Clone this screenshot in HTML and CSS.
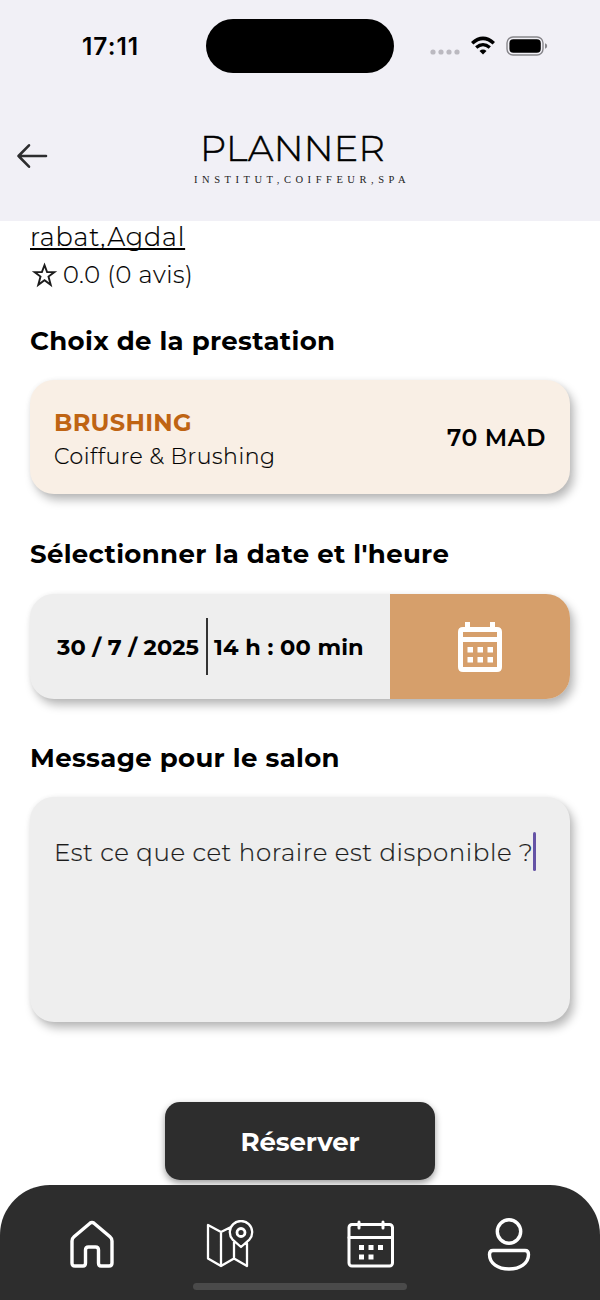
FILE: index.html
```html
<!DOCTYPE html>
<html lang="fr">
<head>
<meta charset="utf-8">
<title>Planner</title>
<link rel="stylesheet" href="styles.css">
</head>
<body>
<div class="screen">
  <header class="top">
    <div class="status">
      <div class="status-side"><span class="clock">17:11</span></div>
      <div class="island"></div>
      <div class="status-side signals">
        <svg class="dots" width="30" height="6" viewBox="0 0 30 6"><circle cx="3" cy="3" r="2.6"/><circle cx="11" cy="3" r="2.6"/><circle cx="19" cy="3" r="2.6"/><circle cx="27" cy="3" r="2.6"/></svg>
        <svg class="wifi" width="26" height="20" viewBox="0 0 26 20"><path d="M2.2 7.2Q13 -2.6 23.8 7.2" stroke-width="3.5"/><path d="M6.2 11.6Q13 5.6 19.8 11.6" stroke-width="3.3"/><path d="M13 18.4L9.5 14.9Q13 12 16.5 14.9Z" class="wifi-dot"/></svg>
        <svg class="battery" width="42" height="20" viewBox="0 0 42 20"><rect x="1" y="1" width="36" height="18" rx="6" class="shell"/><rect x="3.4" y="3.3" width="31.4" height="13.4" rx="4"/><path d="M39 7.2Q41.2 8 41.2 10T39 12.8Z" class="tip"/></svg>
      </div>
    </div>
    <div class="brand-row">
      <svg class="back" width="32" height="26" viewBox="0 0 32 26"><path d="M13 2.3L2.5 13L13 23.7M2.5 13H30"/></svg>
      <div class="brand">
        <div class="brand-name">PLANNER</div>
        <div class="brand-tag">INSTITUT,COIFFEUR,SPA</div>
      </div>
    </div>
  </header>
  <main class="content">
    <a class="address">rabat,Agdal</a>
    <div class="rating">
      <svg width="28" height="28" viewBox="0 0 28 28"><path d="M14.5 4.2L17.1 11.1H24.4L18.5 15.6L20.7 23.8L14.5 19.2L8.3 23.8L10.5 15.6L4.6 11.1H11.9Z"/></svg>
      <span class="score">0.0 (0 avis)</span>
    </div>
    <h2 class="title t-service">Choix de la prestation</h2>
    <section class="card service">
      <div>
        <div class="service-name">BRUSHING</div>
        <div class="service-kind">Coiffure &amp; Brushing</div>
      </div>
      <div class="price">70 MAD</div>
    </section>
    <h2 class="title t-date">Sélectionner la date et l'heure</h2>
    <section class="card schedule">
      <div class="when"><span class="day">30 / 7 / 2025</span><i class="rule"></i><span class="hour">14 h : 00 min</span></div>
      <button class="pick" aria-label="Choisir la date"><svg width="46" height="52" viewBox="0 0 46 52"><path fill-rule="evenodd" d="M8 1H13V6H33V1H38V6H40Q45 6 45 11V46Q45 51 40 51H6Q1 51 1 46V11Q1 6 6 6H8ZM6 11V16H40V11ZM6 21V46H40V21Z"/><path d="M10.5 26H16V31.5H10.5ZM20.5 26H26V31.5H20.5ZM30.5 26H36V31.5H30.5ZM10.5 36H16V41.5H10.5ZM20.5 36H26V41.5H20.5ZM30.5 36H36V41.5H30.5Z"/></svg></button>
    </section>
    <h2 class="title t-message">Message pour le salon</h2>
    <section class="card message"><span class="note">Est ce que cet horaire est disponible ?</span><i class="caret"></i></section>
    <button class="book">Réserver</button>
  </main>
  <nav class="tabs">
    <svg width="44" height="48" viewBox="0 0 44 48"><path stroke-width="3.4" d="M4 16.8L20 3.2Q22 1.6 24 3.2L40 16.8Q42 18.5 42 21V43Q42 46 39 46H31Q28.5 46 28.5 43V30Q28.5 27 25.5 27H18.5Q15.5 27 15.5 30V43Q15.5 46 13 46H5Q2 46 2 43V21Q2 18.5 4 16.8Z"/></svg>
    <svg width="48" height="48" viewBox="0 0 48 48"><path stroke-width="2.3" d="M24 7.5L15 12L2 5V38.5L15 46L28 38.5L41 46V23.5M15 12V46M28 22V38.5M35 27L26.6 19.6A11.2 11.2 0 1 1 43.4 19.6Z"/><circle cx="35" cy="12.5" r="4" stroke-width="2.8"/></svg>
    <svg width="48" height="48" viewBox="0 0 48 48"><rect x="2" y="4.5" width="43.5" height="41.5" rx="3" stroke-width="3"/><path stroke-width="3" d="M2 17.5H45M12 2V8M36 2V8"/><path class="solid" d="M12 25H17V30H12ZM21.5 25H26.5V30H21.5ZM31 25H36V30H31ZM12 34.5H17V39.5H12ZM21.5 34.5H26.5V39.5H21.5Z"/></svg>
    <svg width="44" height="54" viewBox="0 0 44 54"><circle cx="22" cy="14.5" r="11.7" stroke-width="3.4"/><path stroke-width="3.4" d="M6 33.5H38Q41.5 33.5 41.5 37.5C41.5 46.5 33 52 22 52S2.5 46.5 2.5 37.5Q2.5 33.5 6 33.5Z"/></svg>
    <i class="home-bar"></i>
  </nav>
</div>
</body>
</html>
```
FILE: styles.css
```css
* { box-sizing: border-box; }
body { margin: 0; background: #fff; color: #000; font-family: Montserrat, Inter, "Liberation Sans", sans-serif; }
button { border: 0; padding: 0; font-family: inherit; }
.screen { width: 600px; height: 1300px; display: flex; flex-direction: column; overflow: hidden; }

.top { height: 221px; background: #f1f0f6; }
.status { height: 92px; display: flex; align-items: center; }
.status-side { width: 206px; display: flex; align-items: center; white-space: nowrap; }
.clock { margin-left: 82px; font-family: Inter, sans-serif; font-size: 24.5px; font-weight: 600; line-height: 30px; letter-spacing: 1px; }
.island { width: 188px; height: 54px; border-radius: 27px; background: #000; }
.signals { padding-left: 36px; }
.dots { fill: #bbb9c0; margin-top: 12px; }
.wifi { margin-left: 10px; fill: none; stroke: #000; }
.wifi .wifi-dot { fill: #000; stroke: none; }
.battery { margin-left: 10px; }
.battery .shell { fill: none; stroke: #87868b; stroke-width: 1.4; }
.battery .tip { fill: #87868b; }
.brand-row { height: 129px; display: flex; align-items: flex-start; }
.back { margin: 50.5px 0 0 16px; fill: none; stroke: #2d2d2f; stroke-width: 2.6; stroke-linecap: round; stroke-linejoin: round; }
.brand { margin: 36px 0 0 145px; white-space: nowrap; }
.brand-name { padding-left: 7px; font-size: 36.5px; line-height: 40px; font-weight: 300; letter-spacing: 0.3px; -webkit-text-stroke: 0.5px currentColor; }
.brand-tag { font-family: "Liberation Serif", serif; font-size: 10.5px; line-height: 14px; margin-top: 5px; padding-left: 1px; color: #222; letter-spacing: 4.54px; }

.content { flex: 1; display: flex; flex-direction: column; padding: 0 30px; white-space: nowrap; }
.address, .score, .service-kind, .note { font-weight: 300; -webkit-text-stroke: 0.2px currentColor; }
.address { align-self: flex-start; font-size: 25.5px; line-height: 32px; letter-spacing: 0.8px; text-decoration: underline; text-decoration-thickness: 1.5px; text-underline-offset: 2px; text-decoration-skip-ink: none; }
.rating { display: flex; align-items: center; height: 30px; margin-top: 7px; }
.rating svg { fill: none; stroke: #1c1c1c; stroke-width: 1.9; }
.score { padding-left: 5px; font-size: 24px; line-height: 30px; letter-spacing: 0.558px; }
.title { margin: 0; font-size: 26px; line-height: 30px; font-weight: 700; letter-spacing: 0.346px; }
.t-service { margin: 36px 0 24px; }
.t-date { margin: 45px 0 25px; }
.t-message { margin: 44.5px 0 24px; }
.card { border-radius: 24px; box-shadow: 4px 6px 10px rgba(0,0,0,.27), 0 0 5px rgba(0,0,0,.05); }
.service { height: 114px; background: #f9efe5; display: flex; align-items: center; justify-content: space-between; padding: 2px 24px 0; }
.service-name { font-size: 24px; line-height: 34px; font-weight: 700; color: #bf6413; padding-top: 3px; letter-spacing: 0.303px; }
.service-kind { font-size: 22px; line-height: 34px; letter-spacing: 0.52px; }
.price { font-size: 23.5px; line-height: 34px; font-weight: 600; letter-spacing: 0.567px; }
.schedule { height: 104.5px; background: #eee; display: flex; }
.when { width: 360px; display: flex; align-items: center; padding: 2px 0 0 27px; font-size: 22.5px; font-weight: 700; }
.day { letter-spacing: 0.1px; }
.hour { letter-spacing: 0.153px; }
.rule { width: 2px; height: 57px; margin: -2px 6.5px 0; background: #333; }
.pick { width: 180px; border-radius: 0 24px 24px 0; background: #d69f6b; display: flex; align-items: center; justify-content: center; padding-top: 1px; }
.pick svg { fill: #fff; }
.message { height: 225px; background: #eee; display: flex; align-items: flex-start; padding: 35px 24px; }
.note { font-size: 24.5px; line-height: 40px; color: #1c1c1c; letter-spacing: 0.58px; }
.caret { width: 3px; height: 39px; border-radius: 2px; background: #6553a6; }
.book { width: 270px; height: 78px; margin: 80px auto 0; padding-top: 1px; border-radius: 15px; background: #2d2d2d; color: #fff; font-size: 26px; font-weight: 700; letter-spacing: -0.127px; box-shadow: 0 3px 7px rgba(0,0,0,.4); }

.tabs { position: relative; height: 115.5px; border-radius: 50px 50px 0 0; background: #2d2d2d; display: flex; align-items: center; justify-content: space-between; padding: 2.5px 69px 0 69.5px; }
.tabs svg { fill: none; stroke: #fff; stroke-linejoin: round; stroke-linecap: round; }
.tabs .solid { fill: #fff; stroke: none; }
.home-bar { position: absolute; left: 193px; bottom: 10px; width: 214px; height: 7px; border-radius: 4px; background: #4a4a4a; }
```
